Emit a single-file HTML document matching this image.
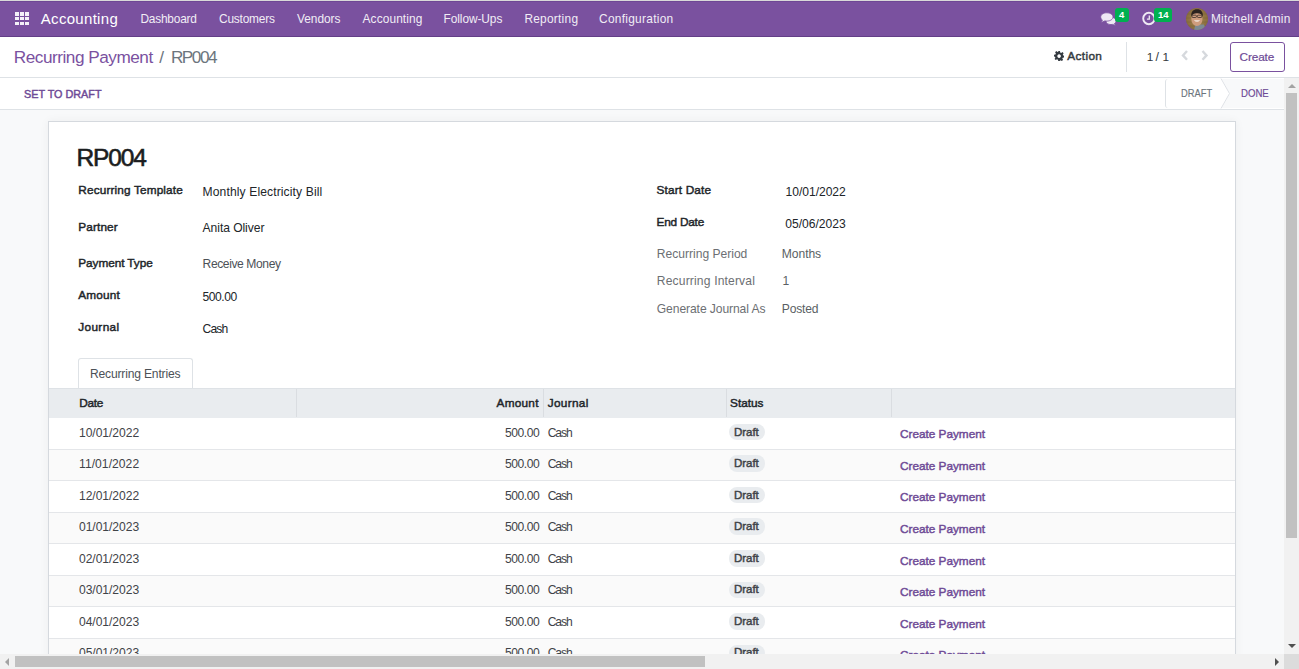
<!DOCTYPE html>
<html><head><meta charset="utf-8"><title>Recurring Payment</title><style>
html,body{margin:0;padding:0;width:1299px;height:669px;overflow:hidden;background:#f8f9fa;font-family:"Liberation Sans",sans-serif;}
.t{position:absolute;white-space:nowrap;line-height:1;}
#topline{position:absolute;left:0;top:0;width:1299px;height:1px;background:#d9d9d9}
#nav{position:absolute;left:0;top:1px;width:1299px;height:36px;box-sizing:border-box;background:#7a519f;border-top:1px solid #6f4795;border-bottom:1px solid #633f87}
.sq{position:absolute;width:3.6px;height:3.5px;background:#f4f0f8}
.nbadge{position:absolute;top:7.7px;height:14px;border-radius:3px;background:#00b050;color:#fff;font-size:9.5px;font-weight:700;text-align:center;line-height:14px}
#cp{position:absolute;left:0;top:37px;width:1299px;height:40px;background:#fff;border-bottom:1px solid #dee2e6}
#createbtn{position:absolute;left:1230px;top:42px;width:55px;height:30px;box-sizing:border-box;border:1px solid #7a519f;border-radius:3px;background:#fff}
#sb{position:absolute;left:0;top:78px;width:1284px;height:31px;background:#fff;border-bottom:1px solid #dee2e6}
#pill_draft{position:absolute;left:1165px;top:79px;width:60px;height:29px;background:#fff;border-left:1px solid #dee2e6;border-radius:3px 0 0 3px}
#pill_done{position:absolute;left:1222px;top:79px;width:62px;height:29px;background:#f8f9fa;clip-path:polygon(0 0,100% 0,100% 100%,0 100%,8px 50%)}
#sheet{position:absolute;left:48px;top:121px;width:1188px;height:600px;box-sizing:border-box;background:#fff;border:1px solid #d5d9de;box-shadow:0 0 9px rgba(0,0,0,.05)}
#tab{position:absolute;left:78px;top:358px;width:115px;height:31px;box-sizing:border-box;border:1px solid #dee2e6;border-bottom:none;border-radius:3px 3px 0 0;background:#fff}
#thead{position:absolute;left:49px;top:388px;width:1186px;height:29.5px;background:#e9ecef;border-top:1px solid #dee2e6;box-sizing:border-box}
.vsep{position:absolute;top:389px;width:1px;height:28px;background:#dadde1}
.row{position:absolute;left:49px;width:1186px;height:31.5px;box-sizing:border-box;border-bottom:1px solid #e4e6e9}
.badge{position:absolute;left:729px;width:36px;height:16.5px;border-radius:8px;background:#e9ecef}
#vscroll{position:absolute;left:1284px;top:78px;width:15px;height:576px;background:#f1f1f1}
#vthumb{position:absolute;left:2px;top:15px;width:11px;height:445px;background:#c1c1c1}
#hscroll{position:absolute;left:0;top:654px;width:1284px;height:15px;background:#f1f1f1}
#hthumb{position:absolute;left:15px;top:2px;width:690px;height:11px;background:#c1c1c1}
#corner{position:absolute;left:1284px;top:654px;width:15px;height:15px;background:#dcdcdc}
.tri{position:absolute;width:0;height:0}
</style></head>
<body>
<div id="topline"></div><div id="nav"></div>
<div class="sq" style="left:15.3px;top:12.1px"></div>
<div class="sq" style="left:20.35px;top:12.1px"></div>
<div class="sq" style="left:25.4px;top:12.1px"></div>
<div class="sq" style="left:15.3px;top:16.85px"></div>
<div class="sq" style="left:20.35px;top:16.85px"></div>
<div class="sq" style="left:25.4px;top:16.85px"></div>
<div class="sq" style="left:15.3px;top:21.6px"></div>
<div class="sq" style="left:20.35px;top:21.6px"></div>
<div class="sq" style="left:25.4px;top:21.6px"></div>
<div class="t" style="top:10.90px;font-size:15px;font-weight:400;color:#ffffff;left:40.80px;letter-spacing:0.303px;">Accounting</div>
<div class="t" style="top:13.53px;font-size:11.9px;font-weight:400;color:#f1edf5;left:140.40px;letter-spacing:-0.207px;">Dashboard</div>
<div class="t" style="top:13.53px;font-size:11.9px;font-weight:400;color:#f1edf5;left:219.00px;letter-spacing:-0.192px;">Customers</div>
<div class="t" style="top:13.53px;font-size:11.9px;font-weight:400;color:#f1edf5;left:297.00px;letter-spacing:-0.031px;">Vendors</div>
<div class="t" style="top:13.53px;font-size:11.9px;font-weight:400;color:#f1edf5;left:362.60px;letter-spacing:0.098px;">Accounting</div>
<div class="t" style="top:13.53px;font-size:11.9px;font-weight:400;color:#f1edf5;left:443.60px;letter-spacing:-0.080px;">Follow-Ups</div>
<div class="t" style="top:13.53px;font-size:11.9px;font-weight:400;color:#f1edf5;left:524.40px;letter-spacing:0.257px;">Reporting</div>
<div class="t" style="top:13.53px;font-size:11.9px;font-weight:400;color:#f1edf5;left:599.00px;letter-spacing:0.290px;">Configuration</div>
<div class="t" style="top:13.53px;font-size:11.9px;font-weight:400;color:#f1edf5;left:1211.00px;letter-spacing:0.200px;">Mitchell Admin</div>
<svg style="position:absolute;left:1098px;top:10px" width="20" height="17" viewBox="0 0 20 17">
<path d="M13 7.2 C15.9 7.2 18 8.8 18 10.9 C18 12 17.4 13 16.4 13.6 L17.6 15.6 L14.6 14.4 C14.1 14.5 13.5 14.6 13 14.6 C10.1 14.6 8 13 8 10.9 C8 8.8 10.1 7.2 13 7.2 Z" fill="#efe9f4" stroke="#7a519f" stroke-width="0.8"/>
<path d="M8.85 2.8 C12.3 2.8 15 4.65 15 6.95 C15 9.25 12.3 11.1 8.85 11.1 C8.1 11.1 7.4 11 6.8 10.9 L3 12.6 L4.4 10 C3.3 9.2 2.7 8.1 2.7 6.95 C2.7 4.65 5.4 2.8 8.85 2.8 Z" fill="#efe9f4" stroke="#7a519f" stroke-width="0.8"/>
</svg>
<div class="nbadge" style="left:1115px;width:13.5px">4</div>
<svg style="position:absolute;left:1141px;top:11px" width="16" height="16" viewBox="0 0 16 16">
<circle cx="7.9" cy="7.5" r="5.7" fill="none" stroke="#efe9f4" stroke-width="1.9"/>
<path d="M8.3 4.4 V8.2 H5.9" fill="none" stroke="#efe9f4" stroke-width="1.3"/>
</svg>
<div class="nbadge" style="left:1154.2px;width:18px">14</div>
<svg style="position:absolute;left:1186px;top:8px" width="22" height="22" viewBox="0 0 22 22">
<defs><clipPath id="av"><circle cx="11" cy="11" r="11"/></clipPath>
<radialGradient id="bg1" cx="50%" cy="50%" r="60%"><stop offset="0" stop-color="#a88a55"/><stop offset="0.8" stop-color="#8a6e3e"/><stop offset="1" stop-color="#5e4828"/></radialGradient></defs>
<g clip-path="url(#av)">
<rect width="22" height="22" fill="url(#bg1)"/>
<path d="M0 6 H22 M0 10 H22 M0 14 H22 M0 18 H22" stroke="#6f5a36" stroke-width="0.6" opacity="0.6"/>
<path d="M8 22 L9.5 16.5 H18 L20 22 Z" fill="#7d8a94"/>
<ellipse cx="10.9" cy="10.8" rx="5.6" ry="7.2" fill="#cf9d7e"/>
<path d="M5.3 8.5 C4.8 3.5 7.5 1.2 11 1.2 C15 1.2 17.3 3.8 16.8 8.8 C16 6.5 14.5 5.2 11 5.2 C8 5.2 6.5 6.3 5.3 8.5 Z" fill="#2b231f"/>
<rect x="6" y="7.2" width="4.4" height="2.3" rx="0.8" fill="none" stroke="#3b302b" stroke-width="0.8"/>
<rect x="11.4" y="7.2" width="4.4" height="2.3" rx="0.8" fill="none" stroke="#3b302b" stroke-width="0.8"/>
<path d="M7.8 12.3 Q11 15.4 14.2 12.3 Z" fill="#f2e8e0"/>
</g></svg>
<div id="cp"></div>
<div class="t" style="top:48.64px;font-size:17.2px;font-weight:400;color:#7a519f;left:13.80px;letter-spacing:-0.483px;">Recurring Payment</div>
<div class="t" style="top:48.64px;font-size:17.2px;font-weight:400;color:#6c757d;left:159.30px;letter-spacing:1.100px;">/</div>
<div class="t" style="top:48.64px;font-size:17.2px;font-weight:400;color:#6c757d;left:170.90px;letter-spacing:-1.473px;">RP004</div>
<svg style="position:absolute;left:1054px;top:50.8px" width="10.2" height="10.2" viewBox="0 0 20 20">
<path fill="#343a40" fill-rule="evenodd" d="M8.3 0 H11.7 L12.2 2.8 L14.2 3.7 L16.5 2.1 L18.9 4.5 L17.3 6.8 L18.2 8.8 L20 9.2 V12.6 L17.2 13.1 L16.3 15.1 L17.9 17.4 L15.5 19.8 L13.2 18.2 L11.7 18.9 L11.2 20 H8.3 L7.8 17.2 L5.8 16.3 L3.5 17.9 L1.1 15.5 L2.7 13.2 L1.8 11.2 L0 10.8 V7.4 L2.8 6.9 L3.7 4.9 L2.1 2.6 L4.5 0.2 L6.8 1.8 L8.8 0.9 Z M10 6.5 A3.5 3.5 0 1 0 10.01 6.5 Z"/>
</svg>
<div class="t" style="top:50.91px;font-size:11.8px;font-weight:400;color:#343a40;left:1067.20px;letter-spacing:0.385px;-webkit-text-stroke:0.45px #343a40;">Action</div>
<div style="position:absolute;left:1126px;top:42px;width:1px;height:30px;background:#dee2e6"></div>
<div class="t" style="top:51.61px;font-size:11.8px;font-weight:400;color:#343a40;left:1146.80px;">1</div>
<div class="t" style="top:51.02px;font-size:12.5px;font-weight:400;color:#343a40;left:1155.60px;">/</div>
<div class="t" style="top:51.61px;font-size:11.8px;font-weight:400;color:#343a40;left:1162.60px;">1</div>
<svg style="position:absolute;left:1180px;top:49px" width="30" height="13" viewBox="0 0 30 13">
<path d="M7 2 L3 6.4 L7 10.8" fill="none" stroke="#d6d9dd" stroke-width="2.4"/>
<path d="M22.5 2 L26.5 6.4 L22.5 10.8" fill="none" stroke="#d6d9dd" stroke-width="2.4"/>
</svg>
<div id="createbtn"></div>
<div class="t" style="top:51.61px;font-size:11.8px;font-weight:400;color:#6e4a96;left:1239.60px;letter-spacing:-0.139px;-webkit-text-stroke:0.2px #6e4a96;">Create</div>
<div id="sb"></div>
<div class="t" style="top:89.17px;font-size:11.5px;font-weight:400;color:#6e4a96;left:23.70px;transform:scaleX(0.9403);transform-origin:0 0;-webkit-text-stroke:0.45px #6e4a96;">SET TO DRAFT</div>
<div id="pill_draft"></div><div id="pill_done"></div>
<svg style="position:absolute;left:1220px;top:78px" width="12" height="31" viewBox="0 0 12 31"><path d="M1 0.5 L9.5 15.5 L1 30.5" fill="none" stroke="#dee2e6" stroke-width="1"/></svg>
<div class="t" style="top:87.18px;font-size:11.6px;font-weight:400;color:#6c757d;left:1180.60px;transform:scaleX(0.8049);transform-origin:0 0;-webkit-text-stroke:0.15px #6c757d;">DRAFT</div>
<div class="t" style="top:87.18px;font-size:11.6px;font-weight:400;color:#6e4a96;left:1241.00px;transform:scaleX(0.8272);transform-origin:0 0;-webkit-text-stroke:0.2px #6e4a96;">DONE</div>
<div id="sheet"></div>
<div class="t" style="top:145.66px;font-size:24.5px;font-weight:400;color:#1b1d20;left:76.60px;letter-spacing:-1.184px;-webkit-text-stroke:0.6px #1b1d20;">RP004</div>
<div class="t" style="top:185.11px;font-size:11.8px;font-weight:400;color:#212529;left:78.30px;letter-spacing:0.143px;-webkit-text-stroke:0.45px #212529;">Recurring Template</div>
<div class="t" style="top:222.11px;font-size:11.8px;font-weight:400;color:#212529;left:78.30px;letter-spacing:0.115px;-webkit-text-stroke:0.45px #212529;">Partner</div>
<div class="t" style="top:258.11px;font-size:11.8px;font-weight:400;color:#212529;left:78.30px;letter-spacing:-0.072px;-webkit-text-stroke:0.45px #212529;">Payment Type</div>
<div class="t" style="top:290.31px;font-size:11.8px;font-weight:400;color:#212529;left:78.30px;letter-spacing:0.154px;-webkit-text-stroke:0.45px #212529;">Amount</div>
<div class="t" style="top:322.11px;font-size:11.8px;font-weight:400;color:#212529;left:78.30px;letter-spacing:0.347px;-webkit-text-stroke:0.45px #212529;">Journal</div>
<div class="t" style="top:186.16px;font-size:12.1px;font-weight:400;color:#212529;left:202.60px;letter-spacing:0.115px;">Monthly Electricity Bill</div>
<div class="t" style="top:221.96px;font-size:12.1px;font-weight:400;color:#212529;left:202.60px;letter-spacing:-0.062px;">Anita Oliver</div>
<div class="t" style="top:258.26px;font-size:12.1px;font-weight:400;color:#4c5157;left:202.60px;letter-spacing:-0.409px;">Receive Money</div>
<div class="t" style="top:290.76px;font-size:12.1px;font-weight:400;color:#212529;left:202.60px;letter-spacing:-0.493px;">500.00</div>
<div class="t" style="top:322.96px;font-size:12.1px;font-weight:400;color:#212529;left:202.60px;letter-spacing:-0.902px;">Cash</div>
<div class="t" style="top:185.01px;font-size:11.8px;font-weight:400;color:#212529;left:656.50px;letter-spacing:0.156px;-webkit-text-stroke:0.45px #212529;">Start Date</div>
<div class="t" style="top:216.81px;font-size:11.8px;font-weight:400;color:#212529;left:656.50px;letter-spacing:-0.211px;-webkit-text-stroke:0.45px #212529;">End Date</div>
<div class="t" style="top:185.56px;font-size:12.1px;font-weight:400;color:#212529;left:785.60px;letter-spacing:-0.045px;">10/01/2022</div>
<div class="t" style="top:217.56px;font-size:12.1px;font-weight:400;color:#212529;left:785.20px;letter-spacing:-0.000px;">05/06/2023</div>
<div class="t" style="top:247.56px;font-size:12.1px;font-weight:400;color:#6c6f73;left:656.80px;letter-spacing:-0.015px;">Recurring Period</div>
<div class="t" style="top:275.46px;font-size:12.1px;font-weight:400;color:#6c6f73;left:656.80px;letter-spacing:0.155px;">Recurring Interval</div>
<div class="t" style="top:302.56px;font-size:12.1px;font-weight:400;color:#6c6f73;left:656.80px;letter-spacing:-0.088px;">Generate Journal As</div>
<div class="t" style="top:247.56px;font-size:12.1px;font-weight:400;color:#5a5f64;left:781.80px;letter-spacing:-0.062px;">Months</div>
<div class="t" style="top:275.46px;font-size:12.1px;font-weight:400;color:#5a5f64;left:782.40px;">1</div>
<div class="t" style="top:302.56px;font-size:12.1px;font-weight:400;color:#5a5f64;left:781.80px;letter-spacing:-0.185px;">Posted</div>
<div id="tab"></div>
<div class="t" style="top:368.16px;font-size:12.1px;font-weight:400;color:#4c5157;left:90.00px;letter-spacing:-0.180px;">Recurring Entries</div>
<div id="thead"></div>
<div class="vsep" style="left:296px"></div>
<div class="vsep" style="left:543px"></div>
<div class="vsep" style="left:726px"></div>
<div class="vsep" style="left:891px"></div>
<div class="t" style="top:398.11px;font-size:11.8px;font-weight:400;color:#212529;left:79.20px;letter-spacing:-0.269px;-webkit-text-stroke:0.45px #212529;">Date</div>
<div class="t" style="top:398.21px;font-size:11.8px;font-weight:400;color:#212529;left:496.60px;letter-spacing:0.234px;-webkit-text-stroke:0.45px #212529;">Amount</div>
<div class="t" style="top:398.21px;font-size:11.8px;font-weight:400;color:#212529;left:547.70px;letter-spacing:0.313px;-webkit-text-stroke:0.45px #212529;">Journal</div>
<div class="t" style="top:398.21px;font-size:11.8px;font-weight:400;color:#212529;left:730.10px;letter-spacing:-0.019px;-webkit-text-stroke:0.45px #212529;">Status</div>
<div class="row" style="top:417.5px;height:32.5px;background:#ffffff"></div>
<div class="t" style="top:426.66px;font-size:12.1px;font-weight:400;color:#3f4348;left:79.00px;letter-spacing:-0.045px;">10/01/2022</div>
<div class="t" style="top:426.66px;font-size:12.1px;font-weight:400;color:#3f4348;left:505.00px;letter-spacing:-0.453px;">500.00</div>
<div class="t" style="top:426.66px;font-size:12.1px;font-weight:400;color:#3f4348;left:547.70px;letter-spacing:-1.069px;">Cash</div>
<div class="badge" style="top:423.9px"></div>
<div class="t" style="top:426.57px;font-size:11.5px;font-weight:400;color:#3f4348;left:734.00px;letter-spacing:-0.044px;-webkit-text-stroke:0.45px #3f4348;">Draft</div>
<div class="t" style="top:429.41px;font-size:11.8px;font-weight:400;color:#6e4a96;left:900.00px;letter-spacing:-0.016px;-webkit-text-stroke:0.45px #6e4a96;">Create Payment</div>
<div class="row" style="top:450px;height:31px;background:#fafafa"></div>
<div class="t" style="top:458.19px;font-size:12.1px;font-weight:400;color:#3f4348;left:79.00px;letter-spacing:0.055px;">11/01/2022</div>
<div class="t" style="top:458.19px;font-size:12.1px;font-weight:400;color:#3f4348;left:505.00px;letter-spacing:-0.453px;">500.00</div>
<div class="t" style="top:458.19px;font-size:12.1px;font-weight:400;color:#3f4348;left:547.70px;letter-spacing:-1.069px;">Cash</div>
<div class="badge" style="top:455.42999999999995px"></div>
<div class="t" style="top:458.10px;font-size:11.5px;font-weight:400;color:#3f4348;left:734.00px;letter-spacing:-0.044px;-webkit-text-stroke:0.45px #3f4348;">Draft</div>
<div class="t" style="top:460.94px;font-size:11.8px;font-weight:400;color:#6e4a96;left:900.00px;letter-spacing:-0.016px;-webkit-text-stroke:0.45px #6e4a96;">Create Payment</div>
<div class="row" style="top:481px;height:32px;background:#ffffff"></div>
<div class="t" style="top:489.72px;font-size:12.1px;font-weight:400;color:#3f4348;left:79.00px;letter-spacing:-0.045px;">12/01/2022</div>
<div class="t" style="top:489.72px;font-size:12.1px;font-weight:400;color:#3f4348;left:505.00px;letter-spacing:-0.453px;">500.00</div>
<div class="t" style="top:489.72px;font-size:12.1px;font-weight:400;color:#3f4348;left:547.70px;letter-spacing:-1.069px;">Cash</div>
<div class="badge" style="top:486.96px"></div>
<div class="t" style="top:489.63px;font-size:11.5px;font-weight:400;color:#3f4348;left:734.00px;letter-spacing:-0.044px;-webkit-text-stroke:0.45px #3f4348;">Draft</div>
<div class="t" style="top:492.47px;font-size:11.8px;font-weight:400;color:#6e4a96;left:900.00px;letter-spacing:-0.016px;-webkit-text-stroke:0.45px #6e4a96;">Create Payment</div>
<div class="row" style="top:513px;height:31px;background:#fafafa"></div>
<div class="t" style="top:521.25px;font-size:12.1px;font-weight:400;color:#3f4348;left:79.00px;letter-spacing:-0.045px;">01/01/2023</div>
<div class="t" style="top:521.25px;font-size:12.1px;font-weight:400;color:#3f4348;left:505.00px;letter-spacing:-0.453px;">500.00</div>
<div class="t" style="top:521.25px;font-size:12.1px;font-weight:400;color:#3f4348;left:547.70px;letter-spacing:-1.069px;">Cash</div>
<div class="badge" style="top:518.49px"></div>
<div class="t" style="top:521.16px;font-size:11.5px;font-weight:400;color:#3f4348;left:734.00px;letter-spacing:-0.044px;-webkit-text-stroke:0.45px #3f4348;">Draft</div>
<div class="t" style="top:524.00px;font-size:11.8px;font-weight:400;color:#6e4a96;left:900.00px;letter-spacing:-0.016px;-webkit-text-stroke:0.45px #6e4a96;">Create Payment</div>
<div class="row" style="top:544px;height:32px;background:#ffffff"></div>
<div class="t" style="top:552.78px;font-size:12.1px;font-weight:400;color:#3f4348;left:79.00px;letter-spacing:-0.045px;">02/01/2023</div>
<div class="t" style="top:552.78px;font-size:12.1px;font-weight:400;color:#3f4348;left:505.00px;letter-spacing:-0.453px;">500.00</div>
<div class="t" style="top:552.78px;font-size:12.1px;font-weight:400;color:#3f4348;left:547.70px;letter-spacing:-1.069px;">Cash</div>
<div class="badge" style="top:550.02px"></div>
<div class="t" style="top:552.69px;font-size:11.5px;font-weight:400;color:#3f4348;left:734.00px;letter-spacing:-0.044px;-webkit-text-stroke:0.45px #3f4348;">Draft</div>
<div class="t" style="top:555.53px;font-size:11.8px;font-weight:400;color:#6e4a96;left:900.00px;letter-spacing:-0.016px;-webkit-text-stroke:0.45px #6e4a96;">Create Payment</div>
<div class="row" style="top:576px;height:31px;background:#fafafa"></div>
<div class="t" style="top:584.31px;font-size:12.1px;font-weight:400;color:#3f4348;left:79.00px;letter-spacing:-0.045px;">03/01/2023</div>
<div class="t" style="top:584.31px;font-size:12.1px;font-weight:400;color:#3f4348;left:505.00px;letter-spacing:-0.453px;">500.00</div>
<div class="t" style="top:584.31px;font-size:12.1px;font-weight:400;color:#3f4348;left:547.70px;letter-spacing:-1.069px;">Cash</div>
<div class="badge" style="top:581.55px"></div>
<div class="t" style="top:584.22px;font-size:11.5px;font-weight:400;color:#3f4348;left:734.00px;letter-spacing:-0.044px;-webkit-text-stroke:0.45px #3f4348;">Draft</div>
<div class="t" style="top:587.06px;font-size:11.8px;font-weight:400;color:#6e4a96;left:900.00px;letter-spacing:-0.016px;-webkit-text-stroke:0.45px #6e4a96;">Create Payment</div>
<div class="row" style="top:607px;height:32px;background:#ffffff"></div>
<div class="t" style="top:615.84px;font-size:12.1px;font-weight:400;color:#3f4348;left:79.00px;letter-spacing:-0.045px;">04/01/2023</div>
<div class="t" style="top:615.84px;font-size:12.1px;font-weight:400;color:#3f4348;left:505.00px;letter-spacing:-0.453px;">500.00</div>
<div class="t" style="top:615.84px;font-size:12.1px;font-weight:400;color:#3f4348;left:547.70px;letter-spacing:-1.069px;">Cash</div>
<div class="badge" style="top:613.08px"></div>
<div class="t" style="top:615.75px;font-size:11.5px;font-weight:400;color:#3f4348;left:734.00px;letter-spacing:-0.044px;-webkit-text-stroke:0.45px #3f4348;">Draft</div>
<div class="t" style="top:618.59px;font-size:11.8px;font-weight:400;color:#6e4a96;left:900.00px;letter-spacing:-0.016px;-webkit-text-stroke:0.45px #6e4a96;">Create Payment</div>
<div class="row" style="top:639px;height:31px;background:#fafafa"></div>
<div class="t" style="top:647.37px;font-size:12.1px;font-weight:400;color:#3f4348;left:79.00px;letter-spacing:-0.045px;">05/01/2023</div>
<div class="t" style="top:647.37px;font-size:12.1px;font-weight:400;color:#3f4348;left:505.00px;letter-spacing:-0.453px;">500.00</div>
<div class="t" style="top:647.37px;font-size:12.1px;font-weight:400;color:#3f4348;left:547.70px;letter-spacing:-1.069px;">Cash</div>
<div class="badge" style="top:644.61px"></div>
<div class="t" style="top:647.28px;font-size:11.5px;font-weight:400;color:#3f4348;left:734.00px;letter-spacing:-0.044px;-webkit-text-stroke:0.45px #3f4348;">Draft</div>
<div class="t" style="top:650.12px;font-size:11.8px;font-weight:400;color:#6e4a96;left:900.00px;letter-spacing:-0.016px;-webkit-text-stroke:0.45px #6e4a96;">Create Payment</div>
<div id="vscroll"><div id="vthumb"></div></div><div id="hscroll"><div id="hthumb"></div></div><div id="corner"></div>
<div class="tri" style="left:1288px;top:84px;border-left:4px solid transparent;border-right:4px solid transparent;border-bottom:4px solid #a3a3a3"></div>
<div class="tri" style="left:1288px;top:644px;border-left:4px solid transparent;border-right:4px solid transparent;border-top:4px solid #505050"></div>
<div class="tri" style="left:5px;top:658px;border-top:4px solid transparent;border-bottom:4px solid transparent;border-right:4px solid #a3a3a3"></div>
<div class="tri" style="left:1275px;top:658px;border-top:4px solid transparent;border-bottom:4px solid transparent;border-left:4px solid #505050"></div>
</body></html>
